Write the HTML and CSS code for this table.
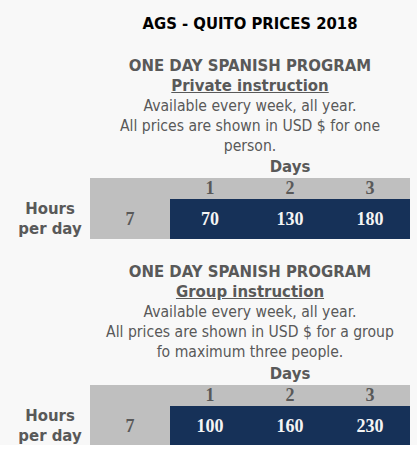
FILE: index.html
```html
<!DOCTYPE html>
<html lang="en">
<head>
    <meta charset="UTF-8">
    <meta name="viewport" content="width=device-width, initial-scale=1.0">
    <title>AGS - Quito Prices 2018</title>
    <link rel="stylesheet" href="styles.css">
</head>
<body>
    <div class="page">
        <h1 class="title">AGS - QUITO PRICES 2018</h1>

        <!-- Private -->
        <div class="program">
            <div class="intro">
                <h2>ONE DAY SPANISH PROGRAM</h2>
                <h3>Private instruction</h3>
                <p>Available every week, all year.</p>
                <p>All prices are shown in USD $ for one person.</p>
            </div>
            <table class="prices">
                <colgroup>
                    <col><col><col><col><col>
                </colgroup>
                <tr>
                    <td colspan="2"></td>
                    <th colspan="3" class="days">Days</th>
                </tr>
                <tr class="day-nums">
                    <td></td>
                    <td class="gray"></td>
                    <th>1</th>
                    <th>2</th>
                    <th>3</th>
                </tr>
                <tr class="values">
                    <th class="hours">Hours<br>per day</th>
                    <td class="gray">7</td>
                    <td class="price">70</td>
                    <td class="price">130</td>
                    <td class="price">180</td>
                </tr>
            </table>
        </div>

        <!-- Group -->
        <div class="program group">
            <div class="intro">
                <h2>ONE DAY SPANISH PROGRAM</h2>
                <h3>Group instruction</h3>
                <p>Available every week, all year.</p>
                <p>All prices are shown in USD $ for a group fo maximum three people.</p>
            </div>
            <table class="prices">
                <colgroup>
                    <col><col><col><col><col>
                </colgroup>
                <tr>
                    <td colspan="2"></td>
                    <th colspan="3" class="days">Days</th>
                </tr>
                <tr class="day-nums">
                    <td></td>
                    <td class="gray"></td>
                    <th>1</th>
                    <th>2</th>
                    <th>3</th>
                </tr>
                <tr class="values">
                    <th class="hours">Hours<br>per day</th>
                    <td class="gray">7</td>
                    <td class="price">100</td>
                    <td class="price">160</td>
                    <td class="price">230</td>
                </tr>
            </table>
        </div>
    </div>
</body>
</html>
```

FILE: styles.css
```css
body {
    margin: 0;
    padding: 0;
    background-color: #fff;
    font-family: "DejaVu Sans Condensed", "DejaVu Sans", sans-serif;
    color: #595959;
}

.page {
    background-color: #f8f8f8;
    padding: 14px 0 0 10px;
    height: 431px;
}

.title {
    margin: 0 0 22px 80px;
    width: 320px;
    text-align: center;
    font-size: 16.5px;
    line-height: 20px;
    color: #000;
}

.program {
    margin-bottom: 23px;
}

.intro {
    margin-left: 90px;
    width: 300px;
    text-align: center;
    font-size: 15.6px;
    line-height: 20px;
}

.intro h2,
.intro h3 {
    margin: 0;
    font-size: 16.6px;
}

.intro p {
    margin: 0;
}

.intro h3 {
    text-decoration: underline;
}

.prices {
    border-collapse: collapse;
    width: 400px;
    table-layout: fixed;
}

.prices col {
    width: 80px;
}

.prices td,
.prices th {
    padding: 0;
    text-align: center;
}

.prices .days {
    font-size: 16.6px;
    line-height: 22px;
    height: 22px;
}

.group .prices .days {
    height: 23px;
}

.day-nums th,
.values td {
    font-family: "Liberation Serif", serif;
    font-weight: bold;
    font-size: 18px;
}

.day-nums th {
    background-color: #bfbfbf;
    height: 21px;
    line-height: 21px;
}

.gray {
    background-color: #bfbfbf;
}

.values td {
    height: 39px;
}

.group .values td {
    height: 40px;
}

.hours {
    font-size: 16.6px;
    line-height: 20px;
}

.price {
    background-color: #163158;
    color: #f4f4f4;
}
```
